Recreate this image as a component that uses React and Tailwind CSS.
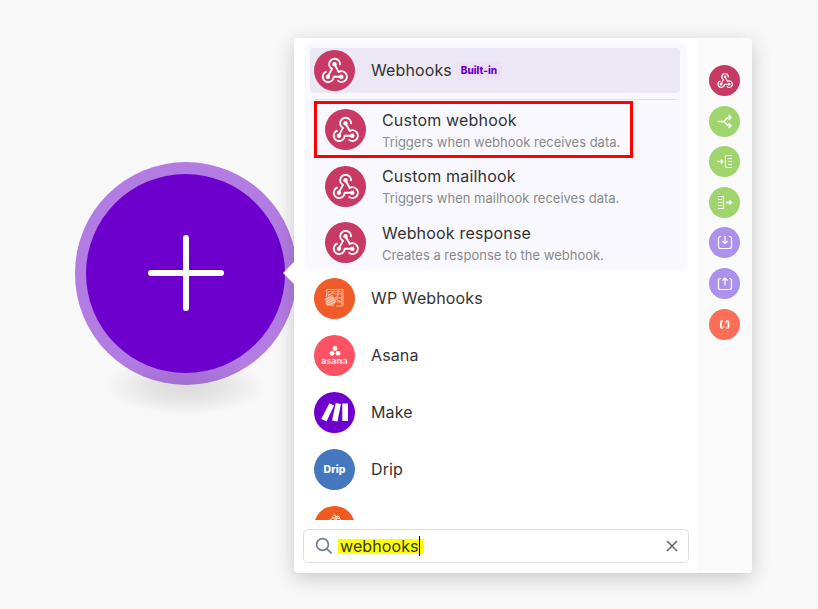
import React from "react";

function WebhookGlyph({ className }) {
  return (
    <svg viewBox="0 0 27 25" className={className} fill="none" stroke="#fff" strokeWidth="1.900" strokeLinecap="butt" strokeLinejoin="round">
      <path d="M20.500 18.800h-7.900a5.400 5.400 0 1 1-7.100-5.300" />
      <path d="m6.800 18.400 4.200-7.500a5.400 5.400 0 1 1 7.900-3.800" />
      <path d="m13.500 6.300 4.200 7.700a5.400 5.400 0 1 1-1.100 8.400" />
      <g fill="#fff" stroke="none">
        <circle cx="13.500" cy="6.200" r="2.200" />
        <circle cx="6.900" cy="18.700" r="2.200" />
        <circle cx="20.300" cy="18.700" r="2.200" />
      </g>
    </svg>
  );
}

function WebhookBadge() {
  return (
    <span className="flex h-[41px] w-[41px] shrink-0 items-center justify-center rounded-full bg-[#c83a63]">
      <WebhookGlyph className="h-[25px] w-[27px] overflow-visible" />
    </span>
  );
}

function WpLogo() {
  return (
    <svg viewBox="0 0 41 41" className="h-[41px] w-[41px] shrink-0" fill="none" stroke="#fbc7b0" strokeWidth="0.900">
      <circle cx="20.500" cy="20.500" r="20.500" fill="#f15a29" stroke="none" />
      <path d="M12.500 19v-7.500h16.500v16.500H22M14 13.500h13.500v13M14 13.500v4l5-3 3 2 5-1M24 12v6l-3 2h7M22 21l5 3h-4" />
      <path d="m10.800 20.500 7.500-3.500 4.500 6-4 5.500-7-1.500z" fill="#f4a07e" stroke="none" />
      <path d="m11 21.500 7.500-4M12 23.500l8-4M12 25.500l9-4M13 27.500l9-4M14 18l5-3" stroke="#fcdccd" strokeWidth="0.700" />
    </svg>
  );
}

function AsanaLogo() {
  return (
    <span className="flex h-[41px] w-[41px] shrink-0 flex-col items-center rounded-full bg-[#fc5263] pt-[11px]">
      <svg viewBox="0 0 12 10" className="h-[10px] w-[12px]" fill="#fff">
        <circle cx="6" cy="2.500" r="2.400" />
        <circle cx="3" cy="7.300" r="2.400" />
        <circle cx="9" cy="7.300" r="2.400" />
      </svg>
      <span className="-mt-px font-['Lato',sans-serif] text-[10px] leading-[10px] font-bold tracking-[0.300px] text-white">asana</span>
    </span>
  );
}

function MakeLogo() {
  return (
    <svg viewBox="0 0 41 41" className="h-[41px] w-[41px] shrink-0">
      <circle cx="20.500" cy="20.500" r="20.500" fill="#6d00cc" />
      <g fill="#fff">
        <path d="m15.400 11.200 4.700 2.200-7.600 16.200-5.200-2.500z" />
        <path d="m21.700 11 5.200 1-3.400 17.600-5.400-1z" />
        <path d="M28.300 11.500h5.700v17.500h-5.700z" />
      </g>
    </svg>
  );
}

function DripLogo() {
  return (
    <span className="flex h-[41px] w-[41px] shrink-0 items-center justify-center rounded-full bg-[#4477bd] font-['Inter',sans-serif] text-[10px] leading-none font-extrabold text-white">
      <span className="scale-x-105 pb-px">Drip</span>
    </span>
  );
}

function SpikyLogo() {
  return (
    <svg viewBox="0 0 41 41" className="h-[41px] w-[41px] shrink-0" fill="none" stroke="#fcd9c8" strokeWidth="1">
      <circle cx="20.500" cy="20.500" r="20.500" fill="#f15a1e" stroke="none" />
      <path d="M15.500 14l6-3M18 10.500l5 3M17.500 12.500l6-2M19 8.500l5 3M21 8.500l1.500 4.500M23 9.500l3 2M24 12l3 1.500M20 13.500l6-1.500" />
    </svg>
  );
}

function SubItem({ title, text, className }) {
  return (
    <div className={"flex items-center " + className}>
      <WebhookBadge />
      <div className="ml-4 pt-[2px] whitespace-nowrap">
        <div className="text-[16px] leading-[22px] tracking-[0.180px] text-[#333]">{title}</div>
        <div className="text-[13px] leading-[22px] text-[#8a8a8a]">{text}</div>
      </div>
    </div>
  );
}

function AppRow({ logo, name }) {
  return (
    <div className="flex h-[57px] shrink-0 items-center gap-4 pl-5 text-[16px] tracking-[0.120px] text-[#333]">
      {logo}
      <span className="pb-[2px]">{name}</span>
    </div>
  );
}

const toolGlyphs = {
  router: <path d="M9 15.500h5.500M21.500 11.300H20c-3 0-3.500 4.200-5.500 4.200 2 0 2.500 4.200 5.500 4.200h1.500M19.700 9l2.500 2.300-2.500 2.400M19.700 17.400l2.500 2.300-2.500 2.300" strokeWidth="1.500" />,
  iterator: (
    <>
      <path d="M8.500 15.500h5M12 13.500l2 2-2 2" strokeWidth="1.400" />
      <path d="M23 9.500h-6.500v12H23M19 12.500h4M19 15.500h4M19 18.500h4" strokeWidth="1.100" />
    </>
  ),
  aggregator: (
    <>
      <path d="M9 9.500h5.500v12H9M9 12.500h4M9 15.500h4M9 18.500h4" strokeWidth="1.100" />
      <path d="M17 15.500h5M20.500 13.500l2 2-2 2" strokeWidth="1.400" />
    </>
  ),
  download: <path d="M12 9.500h-.500a2 2 0 0 0-2 2v8a2 2 0 0 0 2 2h9a2 2 0 0 0 2-2v-8a2 2 0 0 0-2-2H20M16 9v7M13.500 14l2.500 2.500 2.500-2.500" strokeWidth="1.200" />,
  upload: <path d="M12 10.500h-.500a2 2 0 0 0-2 2v7a2 2 0 0 0 2 2h9a2 2 0 0 0 2-2v-7a2 2 0 0 0-2-2H20M16 17.500v-7M13.500 12.500 16 10l2.500 2.500" strokeWidth="1.200" />,
  parser: (
    <>
      <path d="M14 12h-1.200q-.9 0-.9.9v5.200q0 .9.900.9H14M17.200 12h1.400q.9 0 .9.900v5.200q0 .9-.9.900h-1.400" strokeWidth="1.700" />
      <path d="M14.700 17.300v1.500M16.800 12v2.300" strokeWidth="1.300" />
    </>
  ),
};

const tools = [
  { id: "router", color: "#a0d46e" },
  { id: "iterator", color: "#a0d46e" },
  { id: "aggregator", color: "#a0d46e" },
  { id: "download", color: "#ac92ec" },
  { id: "upload", color: "#ac92ec" },
  { id: "parser", color: "#fc6e58" },
];

function AddNode() {
  return (
    <>
      <div className="absolute top-[357px] left-[105px] h-[58px] w-[161px] bg-[radial-gradient(closest-side,#dadada,#e4e4e4_45%,transparent)]" />
      <div className="absolute top-[162px] left-[74.500px] flex h-[222.500px] w-[222.500px] items-center justify-center rounded-full bg-[#6d00cc]/50">
        <div className="flex h-[199px] w-[199px] items-center justify-center rounded-full bg-[#6d00cc]">
          <svg viewBox="0 0 76 76" className="h-[76px] w-[76px]" stroke="#fff" strokeWidth="6" strokeLinecap="round">
            <path d="M38 3v70M3 38h70" />
          </svg>
        </div>
      </div>
    </>
  );
}

export default function App() {
  return (
    <div className="relative h-[609px] w-[818px] overflow-hidden bg-[#f8f8f8] font-['Inter',sans-serif]">
      <AddNode />

      <div className="absolute top-[38px] left-[294px] flex h-[535px] w-[458px] rounded-[4px] bg-white shadow-[0_5px_20px_rgba(0,0,0,0.2)]">
        <svg viewBox="0 0 12 24" className="absolute top-[223px] -left-[11px] h-6 w-3" fill="#fff">
          <path d="M12 0v24L0 12z" />
        </svg>

        <main className="flex w-[403px] flex-col">
          <div className="flex h-[482px] flex-col overflow-hidden pt-1">
            <section className="mr-[10px] ml-[11px] h-[228px] shrink-0 rounded-t-lg bg-[#f9f8fe] pt-[6px]">
              <div className="mr-[7px] ml-[5px] flex h-[45px] items-center rounded-[4px] bg-[#ebe7f4] pl-1">
                <WebhookBadge />
                <span className="ml-4 pb-[2px] text-[16px] tracking-[0.120px] text-[#333]">Webhooks</span>
                <span className="ml-1 flex h-[19px] w-[46px] items-center justify-center rounded-[4px] bg-[#eddff4] text-[10px] font-extrabold text-[#6d00cc]">Built-in</span>
              </div>
              <div className="mt-[6px] mr-[10px] ml-[10px] h-px bg-[#dfdfe4]" />
              <SubItem
                className="mt-px ml-[9px] h-[57px] w-[319px] border-[3px] border-[#f00] pl-2"
                title="Custom webhook"
                text="Triggers when webhook receives data."
              />
              <SubItem className="ml-5 h-[56px]" title="Custom mailhook" text="Triggers when mailhook receives data." />
              <SubItem className="ml-5 h-[57px]" title="Webhook response" text="Creates a response to the webhook." />
            </section>
            <AppRow logo={<WpLogo />} name="WP Webhooks" />
            <AppRow logo={<AsanaLogo />} name="Asana" />
            <AppRow logo={<MakeLogo />} name="Make" />
            <AppRow logo={<DripLogo />} name="Drip" />
            <AppRow logo={<SpikyLogo />} name="" />
          </div>

          <div className="mt-[9px] ml-[9px] flex h-[34px] w-[386px] items-center rounded-[5px] border border-[#dfe0e2] pr-[10px] pl-[11px]">
            <svg viewBox="0 0 18 18" className="h-[18px] w-[18px]" fill="none" stroke="#6f7f90" strokeWidth="1.700">
              <circle cx="7.500" cy="7.500" r="5.900" />
              <path d="m11.800 11.800 4.900 4.500" />
            </svg>
            <span className="ml-[5px] flex h-[15px] w-[86px] items-center bg-[#ff0] pl-[2px] text-[16px] leading-[15px] tracking-[0.100px] text-[#333]">
              webhooks
              <span className="-my-1 h-5 w-px shrink-0 bg-black" />
            </span>
            <svg viewBox="0 0 12 12" className="ml-auto h-3 w-3" stroke="#5f6770" strokeWidth="1.600">
              <path d="m1 1 10 10M11 1 1 11" />
            </svg>
          </div>
        </main>

        <aside className="mb-[2px] flex w-[55px] flex-col items-center gap-[9.600px] rounded-r-[4px] bg-[#fafafa] pt-[27px]">
          <span className="flex h-[31px] w-[31px] shrink-0 items-center justify-center rounded-full bg-[#c83a63]">
            <WebhookGlyph className="h-[15px] w-[16px] overflow-visible" />
          </span>
          {tools.map((tool) => (
            <svg key={tool.id} viewBox="0 0 31 31" className="h-[31px] w-[31px] shrink-0" fill="none" stroke="#fff" strokeLinejoin="round">
              <circle cx="15.500" cy="15.500" r="15.500" fill={tool.color} stroke="none" />
              {toolGlyphs[tool.id]}
            </svg>
          ))}
        </aside>
      </div>
    </div>
  );
}
